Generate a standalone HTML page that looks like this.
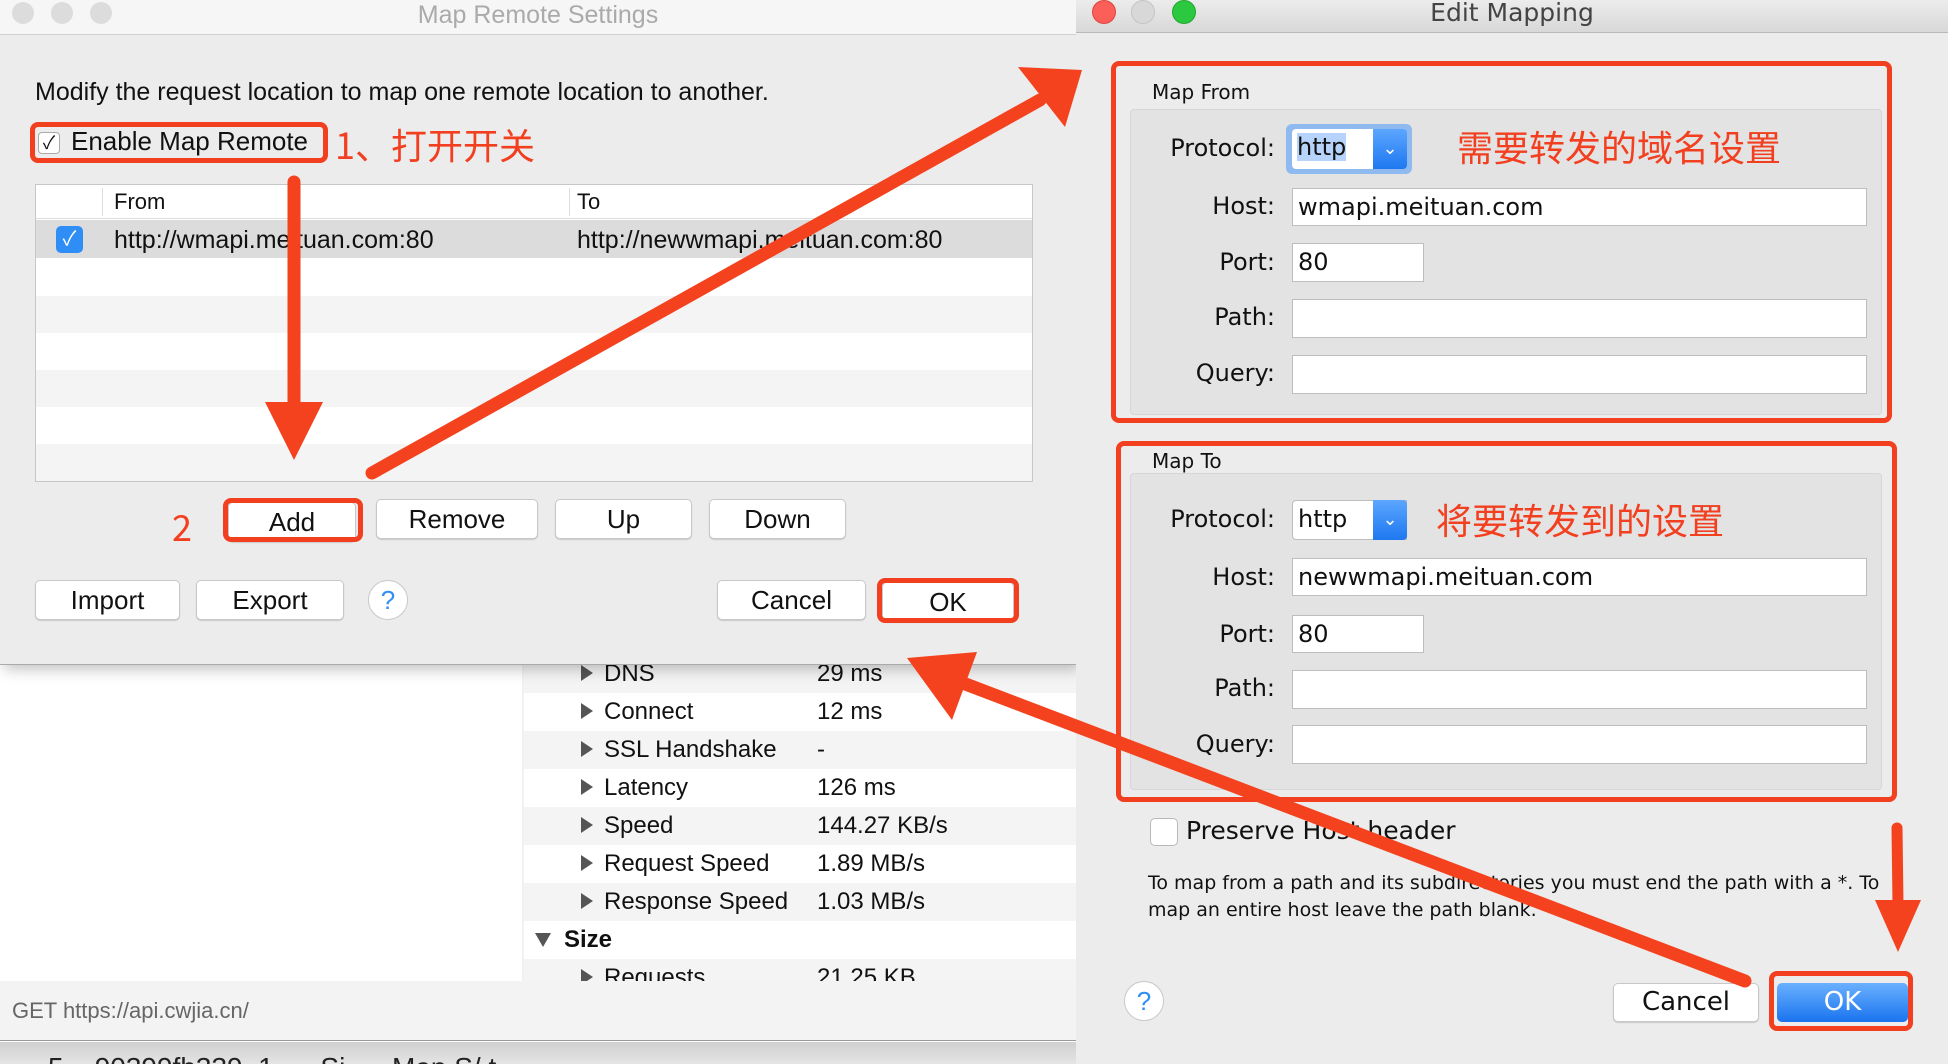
<!DOCTYPE html>
<html><head><meta charset="utf-8"><style>
*{margin:0;padding:0;box-sizing:border-box}
body{width:1948px;height:1064px;overflow:hidden;background:#ececec;position:relative;font-family:"Liberation Sans","Noto Sans CJK SC",sans-serif;color:#111}
.a{position:absolute}
.btn{position:absolute;background:#fff;border:1px solid #c8c8c8;border-radius:5px;box-shadow:0 1px 1px rgba(0,0,0,.15);font-size:26px;text-align:center;line-height:38px}
.red{border:5px solid #f23f1f;border-radius:8px;position:absolute}
.rd{font-family:"DejaVu Sans","Noto Sans CJK SC",sans-serif}
.lbl{position:absolute;width:200px;text-align:right;font-size:24px}
.fld{position:absolute;background:#fff;border:1px solid #bdbdbd;font-size:24px;padding-left:5px;line-height:36px}
.row{position:absolute;left:524px;width:552px;height:38px}
.row span{position:absolute;font-size:24px;top:5px}
.tri{position:absolute;left:57px;top:10px;width:0;height:0;border-left:12px solid #555;border-top:8px solid transparent;border-bottom:8px solid transparent}
.cjk{font-family:"Noto Sans CJK SC",sans-serif;color:#f23f1f}
</style></head><body>
<div class="a" style="left:0;top:665px;width:1076px;height:399px;background:#fff"></div>
<div class="a" style="left:522px;top:665px;width:554px;height:316px;background:#f1f1f1"></div>
<div class="row" style="top:655px;background:#f4f4f4"><div class="tri"></div><span style="left:80px">DNS</span><span style="left:293px">29 ms</span></div>
<div class="row" style="top:693px;background:#fff"><div class="tri"></div><span style="left:80px">Connect</span><span style="left:293px">12 ms</span></div>
<div class="row" style="top:731px;background:#f4f4f4"><div class="tri"></div><span style="left:80px">SSL Handshake</span><span style="left:293px">-</span></div>
<div class="row" style="top:769px;background:#fff"><div class="tri"></div><span style="left:80px">Latency</span><span style="left:293px">126 ms</span></div>
<div class="row" style="top:807px;background:#f4f4f4"><div class="tri"></div><span style="left:80px">Speed</span><span style="left:293px">144.27 KB/s</span></div>
<div class="row" style="top:845px;background:#fff"><div class="tri"></div><span style="left:80px">Request Speed</span><span style="left:293px">1.89 MB/s</span></div>
<div class="row" style="top:883px;background:#f4f4f4"><div class="tri"></div><span style="left:80px">Response Speed</span><span style="left:293px">1.03 MB/s</span></div>
<div class="row" style="top:921px;background:#fff"><div class="a" style="left:11px;top:12px;border-top:14px solid #555;border-left:8px solid transparent;border-right:8px solid transparent"></div><span style="left:40px;font-weight:bold">Size</span></div>
<div class="row" style="top:959px;background:#f4f4f4;height:22px;overflow:hidden"><div class="tri"></div><span style="left:80px">Requests</span><span style="left:293px">21.25 KB</span></div>
<div class="a" style="left:0;top:981px;width:1076px;height:60px;background:#f3f3f3;border-bottom:1px solid #999"></div>
<div class="a" style="left:12px;top:998px;font-size:22px;color:#666">GET https://api.cwjia.cn/</div>
<div class="a" style="left:0;top:1042px;width:1076px;height:22px;background:linear-gradient(#d0d0d0,#e4e4e4);overflow:hidden"><div class="a" style="left:48px;top:10px;font-size:28px;color:#222;white-space:nowrap">5 &nbsp; &nbsp;90399fb339 &nbsp;1 &nbsp; &nbsp; &nbsp;Si &nbsp; &nbsp; &nbsp;Map S/ t</div></div>

<div class="a" style="left:0;top:0;width:1076px;height:665px;background:#ececec;border-bottom:1px solid #aaa;box-shadow:4px 4px 14px rgba(0,0,0,.25)"></div>
<div class="a" style="left:0;top:0;width:1076px;height:35px;background:#f6f6f6;border-bottom:1px solid #d0d0d0"></div>
<div class="a" style="left:12px;top:2px;width:22px;height:22px;border-radius:50%;background:#dcdcdc"></div>
<div class="a" style="left:51px;top:2px;width:22px;height:22px;border-radius:50%;background:#dcdcdc"></div>
<div class="a" style="left:90px;top:2px;width:22px;height:22px;border-radius:50%;background:#dcdcdc"></div>
<div class="a" style="left:0;top:0;width:1076px;text-align:center;font-size:25px;color:#aaa;line-height:30px">Map Remote Settings</div>
<div class="a" style="left:35px;top:78px;font-size:25px">Modify the request location to map one remote location to another.</div>
<div class="red" style="left:30px;top:122px;width:298px;height:41px"></div>
<div class="a" style="left:38px;top:132px;width:22px;height:22px;background:#fff;border:1px solid #aaa;border-radius:4px;font-size:18px;line-height:20px;text-align:center">✓</div>
<div class="a" style="left:71px;top:126px;font-size:26px">Enable Map Remote</div>
<div class="a cjk" style="left:335px;top:118px;font-size:36px">1、打开开关</div>
<div class="a" style="left:35px;top:184px;width:998px;height:298px;background:#fff;border:1px solid #c6c6c6"></div>
<div class="a" style="left:36px;top:185px;width:996px;height:34px;background:#fff;border-bottom:1px solid #ddd"></div>
<div class="a" style="left:102px;top:188px;width:1px;height:28px;background:#ddd"></div>
<div class="a" style="left:569px;top:188px;width:1px;height:28px;background:#ddd"></div>
<div class="a" style="left:114px;top:189px;font-size:22px">From</div>
<div class="a" style="left:577px;top:189px;font-size:22px">To</div>
<div class="a" style="left:36px;top:220px;width:996px;height:38px;background:#dcdcdc"></div>
<div class="a" style="left:56px;top:226px;width:27px;height:27px;background:#2f8ef5;border-radius:5px;color:#fff;font-size:20px;text-align:center;line-height:27px">✓</div>
<div class="a" style="left:114px;top:226px;font-size:25px">http://wmapi.meituan.com:80</div>
<div class="a" style="left:577px;top:226px;font-size:25px">http://newwmapi.meituan.com:80</div>
<div class="a" style="left:36px;top:296px;width:996px;height:37px;background:#f4f4f4"></div>
<div class="a" style="left:36px;top:370px;width:996px;height:37px;background:#f4f4f4"></div>
<div class="a" style="left:36px;top:444px;width:996px;height:37px;background:#f4f4f4"></div>
<div class="a cjk" style="left:172px;top:500px;font-size:36px">2</div>
<div class="btn" style="left:228px;top:502px;width:128px">Add</div>
<div class="red" style="left:223px;top:498px;width:140px;height:44px"></div>
<div class="btn" style="left:376px;top:499px;width:162px">Remove</div>
<div class="btn" style="left:555px;top:499px;width:137px">Up</div>
<div class="btn" style="left:709px;top:499px;width:137px">Down</div>
<div class="btn" style="left:35px;top:580px;width:145px">Import</div>
<div class="btn" style="left:196px;top:580px;width:148px">Export</div>
<div class="a" style="left:368px;top:580px;width:40px;height:40px;border-radius:50%;background:#fff;border:1px solid #c8c8c8;color:#2f8ef5;font-size:26px;text-align:center;line-height:38px">?</div>
<div class="btn" style="left:717px;top:580px;width:149px">Cancel</div>
<div class="btn" style="left:882px;top:582px;width:132px">OK</div>
<div class="red" style="left:877px;top:578px;width:142px;height:45px"></div>

<div class="a rd" style="left:1076px;top:0;width:872px;height:1064px;background:#ececec">
<div class="a" style="left:0;top:0;width:872px;height:33px;background:linear-gradient(#ececec,#d8d8d8);border-bottom:1px solid #b8b8b8"></div>
<div class="a" style="left:16px;top:0;width:24px;height:24px;border-radius:50%;background:#fc5f57;border:1px solid #e0443e"></div>
<div class="a" style="left:55px;top:0;width:24px;height:24px;border-radius:50%;background:#d8d8d8;border:1px solid #c4c4c4"></div>
<div class="a" style="left:96px;top:0;width:24px;height:24px;border-radius:50%;background:#2bc840;border:1px solid #1fa830"></div>
<div class="a" style="left:0;top:0;width:872px;text-align:center;font-size:25px;color:#444;line-height:26px">Edit Mapping</div>
</div>
<div class="a rd" style="left:1152px;top:80px;font-size:20px">Map From</div>
<div class="a" style="left:1130px;top:109px;width:752px;height:306px;background:#e3e3e3;border:1px solid #d6d6d6;border-radius:4px"></div>
<div class="red" style="left:1111px;top:61px;width:781px;height:362px"></div>
<div class="lbl rd" style="left:1075px;top:134px">Protocol:</div>
<div class="lbl rd" style="left:1075px;top:192px">Host:</div>
<div class="lbl rd" style="left:1075px;top:248px">Port:</div>
<div class="lbl rd" style="left:1075px;top:303px">Path:</div>
<div class="lbl rd" style="left:1075px;top:359px">Query:</div>
<div class="a" style="left:1286px;top:124px;width:126px;height:50px;border-radius:6px;background:#8fbaf0"></div>
<div class="fld rd" style="left:1292px;top:129px;width:114px;height:40px;border:none;border-radius:4px"><span style="background:#b6d4fb">http</span></div>
<div class="a" style="left:1373px;top:129px;width:34px;height:40px;background:linear-gradient(#5ca6ff,#1e78f0);border-radius:0 4px 4px 0;color:#fff;text-align:center;font-size:18px;line-height:38px">⌄</div>
<div class="a cjk" style="left:1457px;top:120px;font-size:36px">需要转发的域名设置</div>
<div class="fld rd" style="left:1292px;top:188px;width:575px;height:38px">wmapi.meituan.com</div>
<div class="fld rd" style="left:1292px;top:243px;width:132px;height:39px">80</div>
<div class="fld rd" style="left:1292px;top:299px;width:575px;height:39px"></div>
<div class="fld rd" style="left:1292px;top:355px;width:575px;height:39px"></div>

<div class="a rd" style="left:1152px;top:449px;font-size:20px">Map To</div>
<div class="a" style="left:1130px;top:473px;width:752px;height:317px;background:#e3e3e3;border:1px solid #d6d6d6;border-radius:4px"></div>
<div class="red" style="left:1116px;top:441px;width:781px;height:361px"></div>
<div class="lbl rd" style="left:1075px;top:505px">Protocol:</div>
<div class="lbl rd" style="left:1075px;top:563px">Host:</div>
<div class="lbl rd" style="left:1075px;top:620px">Port:</div>
<div class="lbl rd" style="left:1075px;top:674px">Path:</div>
<div class="lbl rd" style="left:1075px;top:730px">Query:</div>
<div class="fld rd" style="left:1292px;top:500px;width:115px;height:40px;border-radius:4px 0 0 4px">http</div>
<div class="a" style="left:1373px;top:500px;width:34px;height:40px;background:linear-gradient(#5ca6ff,#1e78f0);border-radius:0 4px 4px 0;color:#fff;text-align:center;font-size:18px;line-height:38px">⌄</div>
<div class="a cjk" style="left:1436px;top:493px;font-size:36px">将要转发到的设置</div>
<div class="fld rd" style="left:1292px;top:558px;width:575px;height:38px">newwmapi.meituan.com</div>
<div class="fld rd" style="left:1292px;top:615px;width:132px;height:38px">80</div>
<div class="fld rd" style="left:1292px;top:670px;width:575px;height:39px"></div>
<div class="fld rd" style="left:1292px;top:725px;width:575px;height:39px"></div>

<div class="a" style="left:1150px;top:818px;width:28px;height:28px;background:#fff;border:1px solid #b8b8b8;border-radius:5px"></div>
<div class="a rd" style="left:1186px;top:816px;font-size:25px">Preserve Host header</div>
<div class="a rd" style="left:1148px;top:870px;font-size:19px;line-height:27px;width:760px">To map from a path and its subdirectories you must end the path with a *. To<br>map an entire host leave the path blank.</div>
<div class="a" style="left:1124px;top:981px;width:40px;height:40px;border-radius:50%;background:#fff;border:1px solid #c8c8c8;color:#2f8ef5;font-size:26px;text-align:center;line-height:38px">?</div>
<div class="btn rd" style="left:1613px;top:983px;width:146px;height:39px;line-height:37px">Cancel</div>
<div class="a rd" style="left:1777px;top:983px;width:131px;height:39px;border-radius:5px;background:linear-gradient(#6ab0ff,#1a74ee);color:#fff;font-size:26px;text-align:center;line-height:39px">OK</div>
<div class="red" style="left:1769px;top:971px;width:144px;height:60px"></div>

<svg class="a" style="left:0;top:0" width="1948" height="1064">
<g fill="#f4421f" stroke="#f4421f" stroke-linecap="round">
<line x1="294" y1="182" x2="294" y2="410" stroke-width="13"/>
<polygon points="265,402 323,402 294,460" stroke="none"/>
<line x1="372" y1="473" x2="1040" y2="100" stroke-width="13"/>
<polygon points="1082,70 1065,127 1018,67" stroke="none"/>
<line x1="1745" y1="981" x2="955" y2="680" stroke-width="13"/>
<polygon points="907,658 977,652 952,720" stroke="none"/>
<line x1="1897" y1="828" x2="1898" y2="905" stroke-width="11"/>
<polygon points="1875,900 1921,900 1898,952" stroke="none"/>
</g>
</svg>
</body></html>
